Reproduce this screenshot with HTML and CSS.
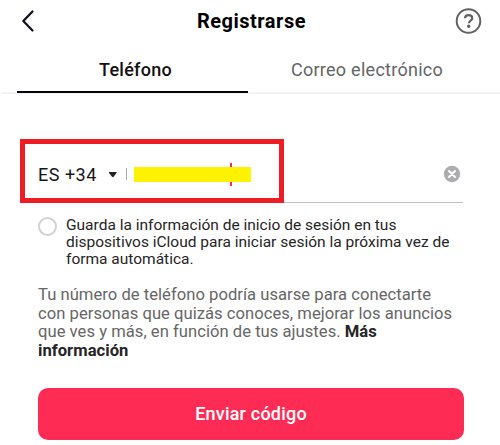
FILE: index.html
```html
<!DOCTYPE html>
<html lang="es">
<head>
<meta charset="utf-8">
<title>Registrarse</title>
<link rel="stylesheet" href="styles.css">
</head>
<body>
<header class="header">
  <svg class="back" width="14" height="24" viewBox="0 0 14 24" aria-label="Atrás"><path d="M11.500 2.500 2.300 12 11.500 21.500"/></svg>
  <h1 class="title"><span>Registrarse</span></h1>
  <svg class="help" width="28" height="28" viewBox="0 0 28 28" aria-label="Ayuda"><circle cx="13.500" cy="14" r="11.800"/><path d="M10 11.300C10.100 9.300 11.600 8.200 13.600 8.200c2.100 0 3.600 1.200 3.600 3 0 2.500-3.300 2.600-3.300 5.100"/><circle class="dot" cx="13.700" cy="19.200" r="1.700"/></svg>
</header>
<nav class="tabs">
  <a class="tab active"><span>Teléfono</span></a>
  <a class="tab mail"><span>Correo electrónico</span></a>
</nav>
<main class="form">
  <div class="field">
    <div class="phone">
      <span class="code">ES +34</span>
      <svg class="caret" width="10" height="6" viewBox="0 0 10 6"><path d="M1.500 0h6.500q1.200 0 .5 1L5.600 4.800q-.8.9-1.600 0L1 1Q.3 0 1.500 0Z"/></svg>
      <span class="divider"></span>
      <span class="number"><span class="cursor"></span><span class="mask"></span></span>
    </div>
    <svg class="clear" width="18" height="18" viewBox="0 0 18 18" aria-label="Borrar"><circle cx="9" cy="9" r="8.200"/><path d="m6 6 6 6m0-6-6 6"/></svg>
  </div>
  <label class="save">
    <span class="radio"></span>
    <span class="save-text">Guarda la información de inicio de sesión en tus<br>dispositivos iCloud para iniciar sesión la próxima vez de<br>forma automática.</span>
  </label>
  <p class="notice">Tu número de teléfono podría usarse para conectarte<br>con personas que quizás conoces, mejorar los anuncios<br>que ves y más, en función de tus ajustes. <b>Más<br>información</b></p>
  <button class="send">Enviar código</button>
</main>
</body>
</html>
```
FILE: styles.css
```css
* { box-sizing: border-box; }
body {
  margin: 0;
  width: 500px;
  height: 445px;
  overflow: hidden;
  background: #fff;
  color: #000;
  font-family: Roboto, "Liberation Sans", sans-serif;
}
.header {
  display: flex;
  align-items: center;
  height: 42px;
  padding: 0 17px 0 21px;
}
.back { fill: none; stroke: #10101c; stroke-width: 2.2; stroke-linecap: round; stroke-linejoin: round; }
.title {
  flex: 1;
  margin: 0 0 0 14px;
  padding-right: 1px;
  text-align: center;
  font-size: 20px;
  line-height: 24px;
  font-weight: 700;
  letter-spacing: .5px;
}
.help { fill: none; stroke: #626262; stroke-width: 2; }
.help path { stroke-width: 2.2; }
.help .dot { fill: #626262; stroke: none; }
.tabs {
  display: flex;
  height: 52px;
  margin-left: 1px;
  padding-left: 16px;
  background: linear-gradient(#f3f3f3, #f3f3f3) 0 100% / 100% 2px no-repeat;
}
.tab {
  width: 231px;
  height: 51px;
  padding-top: 17px;
  text-align: center;
  font-size: 18px;
  line-height: 22px;
  letter-spacing: .27px;
  color: #656565;
}
.active { padding-left: 6px; color: #111; font-weight: 500; border-bottom: 2px solid #04040f; }
.mail { width: 238px; }
.form { padding: 45px 36px 0 20px; }
.field {
  display: flex;
  align-items: center;
  justify-content: space-between;
  height: 64px;
  margin-right: 1px;
  background: linear-gradient(#bfbfbf, #bfbfbf) 0 100% / 100% 1px no-repeat;
}
.phone {
  display: flex;
  align-items: center;
  width: 264px;
  height: 64px;
  padding: 6px 0 0 13px;
  border: 5px solid #ee1c24;
  background: #fff;
}
.code { width: 70px; padding-top: 1px; font-size: 18px; line-height: 22px; letter-spacing: .5px; color: #161616; }
.caret { margin-top: 2px; fill: #222; }
.divider { width: 1px; height: 12px; margin: 0 7px 0 8px; background: #aaa; }
.number { display: grid; width: 117px; height: 23px; align-items: center; }
.cursor, .mask { grid-area: 1 / 1; }
.cursor { width: 2px; height: 23px; margin-left: 96px; background: #fe2c55; }
.mask { height: 15px; background: #fff200; }
.clear { margin: 6px 2px 0 0; fill: #adadb1; }
.clear path { fill: none; stroke: #fff; stroke-width: 2; stroke-linecap: round; }
.save { display: flex; margin: 14px 0 0 18px; }
.radio { width: 19px; height: 19px; border: 2px solid #d2d2d2; border-radius: 50%; }
.save-text { margin-left: 9px; white-space: nowrap; font-size: 15.5px; line-height: 17px; color: #252525; }
.notice { margin: 18px 0 0 18px; white-space: nowrap; font-size: 16.6px; line-height: 18.5px; letter-spacing: .03px; color: #666; }
.notice b { color: #252525; font-weight: 700; }
.send {
  display: block;
  width: 426px;
  height: 52px;
  margin: 28px 0 0 18px;
  padding: 0;
  border: 0;
  border-radius: 10px;
  background: #fe2c55;
  color: #fff;
  font: 500 18px/52px Roboto, "Liberation Sans", sans-serif;
  letter-spacing: .2px;
}
```
